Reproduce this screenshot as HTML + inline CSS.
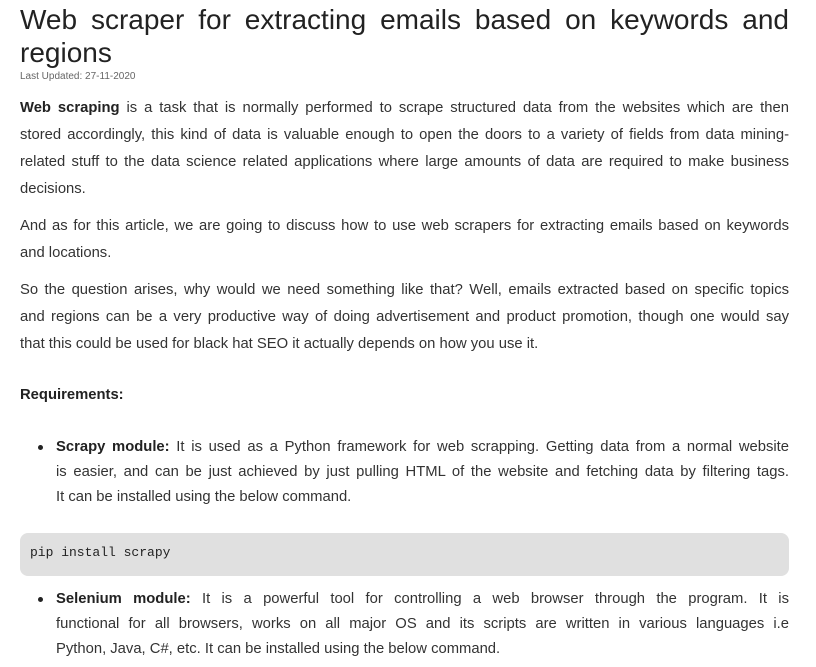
<!DOCTYPE html>
<html><head><meta charset="utf-8"><style>
body{margin:0;background:#fff;width:816px;height:667px;overflow:hidden;font-family:"Liberation Sans",sans-serif;color:#333;}
.l{position:absolute;left:20px;width:769px;white-space:nowrap;font-size:14.8px;text-align:justify;text-align-last:justify;line-height:20px;}
.n{text-align-last:left;}
.li{left:56px;width:733px;}
.t{position:absolute;left:20px;width:769px;font-size:28px;color:#222;line-height:34px;white-space:nowrap;}
b{color:#222;}
.dot{position:absolute;left:38px;width:5px;height:5px;border-radius:50%;background:#222;}
</style></head><body>
<div class="t" style="top:3px;text-align:justify;text-align-last:justify">Web scraper for extracting emails based on keywords and</div>
<div class="t" style="top:36px">regions</div>
<div style="position:absolute;left:20px;top:71px;font-size:10px;color:#666">Last Updated: 27-11-2020</div>

<div class="l" style="top:98px"><b>Web scraping</b> is a task that is normally performed to scrape structured data from the websites which are then</div>
<div class="l" style="top:125px">stored accordingly, this kind of data is valuable enough to open the doors to a variety of fields from data mining-</div>
<div class="l" style="top:152px">related stuff to the data science related applications where large amounts of data are required to make business</div>
<div class="l n" style="top:179px">decisions.</div>

<div class="l" style="top:216px">And as for this article, we are going to discuss how to use web scrapers for extracting emails based on keywords</div>
<div class="l n" style="top:243px">and locations.</div>

<div class="l" style="top:280px">So the question arises, why would we need something like that? Well, emails extracted based on specific topics</div>
<div class="l" style="top:307px">and regions can be a very productive way of doing advertisement and product promotion, though one would say</div>
<div class="l n" style="top:334px">that this could be used for black hat SEO it actually depends on how you use it.</div>

<div class="l n" style="top:385px"><b>Requirements:</b></div>

<div class="dot" style="top:445px"></div>
<div class="l li" style="top:437px"><b>Scrapy module:</b> It is used as a Python framework for web scrapping. Getting data from a normal website</div>
<div class="l li" style="top:462px">is easier, and can be just achieved by just pulling HTML of the website and fetching data by filtering tags.</div>
<div class="l li n" style="top:487px">It can be installed using the below command.</div>

<div style="position:absolute;left:20px;top:533px;width:769px;height:43px;background:#e0e0e0;border-radius:8px"></div>
<div style="position:absolute;left:30px;top:545px;font-family:'Liberation Mono',monospace;font-size:13px;color:#222">pip install scrapy</div>

<div class="dot" style="top:597px"></div>
<div class="l li" style="top:589px"><b>Selenium module:</b> It is a powerful tool for controlling a web browser through the program. It is</div>
<div class="l li" style="top:614px">functional for all browsers, works on all major OS and its scripts are written in various languages i.e</div>
<div class="l li n" style="top:639px">Python, Java, C#, etc. It can be installed using the below command.</div>
</body></html>
